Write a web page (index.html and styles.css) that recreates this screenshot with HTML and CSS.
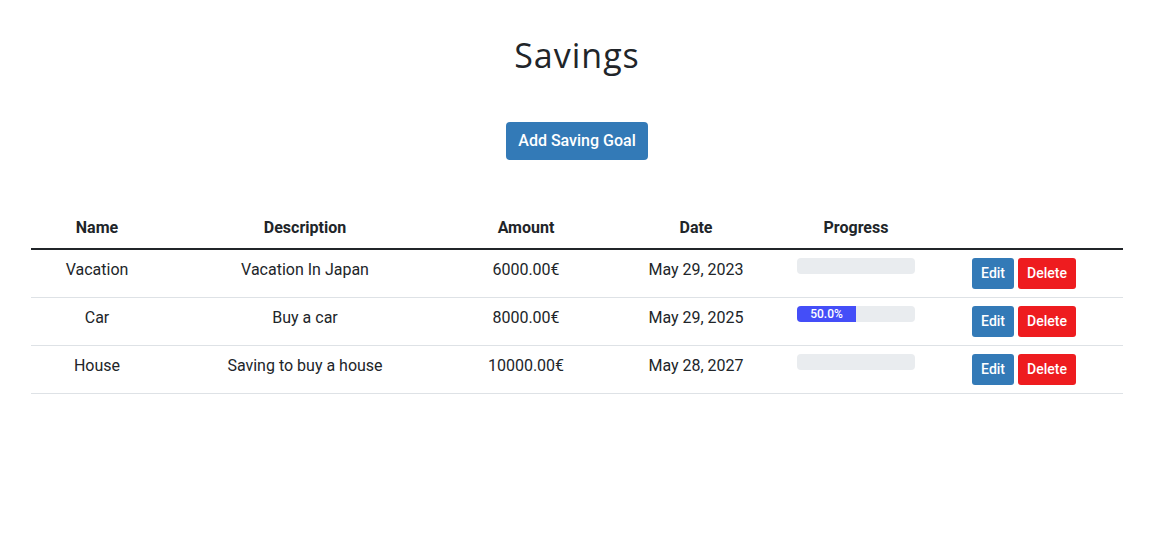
FILE: index.html
```html
<!DOCTYPE html>
<html>
<head>
<meta charset="utf-8">
<link rel="stylesheet" href="styles.css">
</head>
<body>
<div class="page">
  <h1 class="title">Savings</h1>
  <div class="actions-top">
    <button class="btn btn-primary btn-lg">Add Saving Goal</button>
  </div>
  <table class="goals">
    <colgroup>
      <col class="c-name"><col class="c-desc"><col class="c-amount"><col class="c-date"><col class="c-progress"><col class="c-actions">
    </colgroup>
    <thead>
      <tr><th>Name</th><th>Description</th><th>Amount</th><th>Date</th><th>Progress</th><th></th></tr>
    </thead>
    <tbody>
      <tr>
        <td>Vacation</td><td>Vacation In Japan</td><td>6000.00€</td><td>May 29, 2023</td>
        <td><div class="progress"></div></td>
        <td><div class="btns"><button class="btn btn-primary btn-sm">Edit</button><button class="btn btn-danger btn-sm">Delete</button></div></td>
      </tr>
      <tr>
        <td>Car</td><td>Buy a car</td><td>8000.00€</td><td>May 29, 2025</td>
        <td><div class="progress"><div class="progress-bar" style="width:50%">50.0%</div></div></td>
        <td><div class="btns"><button class="btn btn-primary btn-sm">Edit</button><button class="btn btn-danger btn-sm">Delete</button></div></td>
      </tr>
      <tr>
        <td>House</td><td>Saving to buy a house</td><td>10000.00€</td><td>May 28, 2027</td>
        <td><div class="progress"></div></td>
        <td><div class="btns"><button class="btn btn-primary btn-sm">Edit</button><button class="btn btn-danger btn-sm">Delete</button></div></td>
      </tr>
    </tbody>
  </table>
</div>
</body>
</html>
```
FILE: styles.css
```css
html, body {
  margin: 0;
  padding: 0;
  background: #fff;
}
body {
  font-family: Roboto, "Liberation Sans", sans-serif;
  color: #212529;
  font-size: 16px;
  line-height: 24px;
}
.page {
  padding: 0 48px 0 31px;
}
.title {
  margin: 0;
  padding-top: 33px;
  text-align: center;
  font-family: "Open Sans", "DejaVu Sans", sans-serif;
  font-weight: 500;
  font-size: 34px;
  line-height: 44px;
  color: #212529;
  letter-spacing: 1px;
}
.actions-top {
  display: flex;
  justify-content: center;
  margin-top: 45px;
}
.btn {
  border: none;
  color: #fff;
  font-family: Roboto, "Liberation Sans", sans-serif;
  font-weight: 500;
  cursor: pointer;
}
.btn-primary { background: #337ab7; }
.btn-danger { background: #ee1c1f; }
.btn-lg {
  width: 142px;
  height: 38px;
  font-size: 16px;
  border-radius: 4px;
  padding: 0 0 2px;
}
.btn-sm {
  height: 31px;
  font-size: 14px;
  border-radius: 3px;
  padding: 0 9px 1px;
}
.goals {
  margin-top: 50px;
  width: 100%;
  border-collapse: collapse;
  table-layout: fixed;
}
.c-name { width: 132px; }
.c-desc { width: 284px; }
.c-amount { width: 158px; }
.c-date { width: 182px; }
.c-progress { width: 138px; }
.c-actions { width: 198px; }
.goals th {
  font-weight: 700;
  text-align: center;
  padding: 6px 10px 8px;
  border-bottom: 2px solid #212529;
  font-size: 16px;
}
.goals td {
  text-align: center;
  vertical-align: top;
  padding: 8px 10px;
  border-bottom: 1px solid #dee2e6;
  height: 31px;
}
.progress {
  height: 16px;
  background: #e9ecef;
  border-radius: 4px;
  overflow: hidden;
  display: flex;
}
.progress-bar {
  background: #444ef8;
  color: #fff;
  font-size: 12px;
  line-height: 16px;
  text-align: center;
  font-weight: 500;
}
.btns {
  display: flex;
  justify-content: center;
  gap: 4px;
}
```
